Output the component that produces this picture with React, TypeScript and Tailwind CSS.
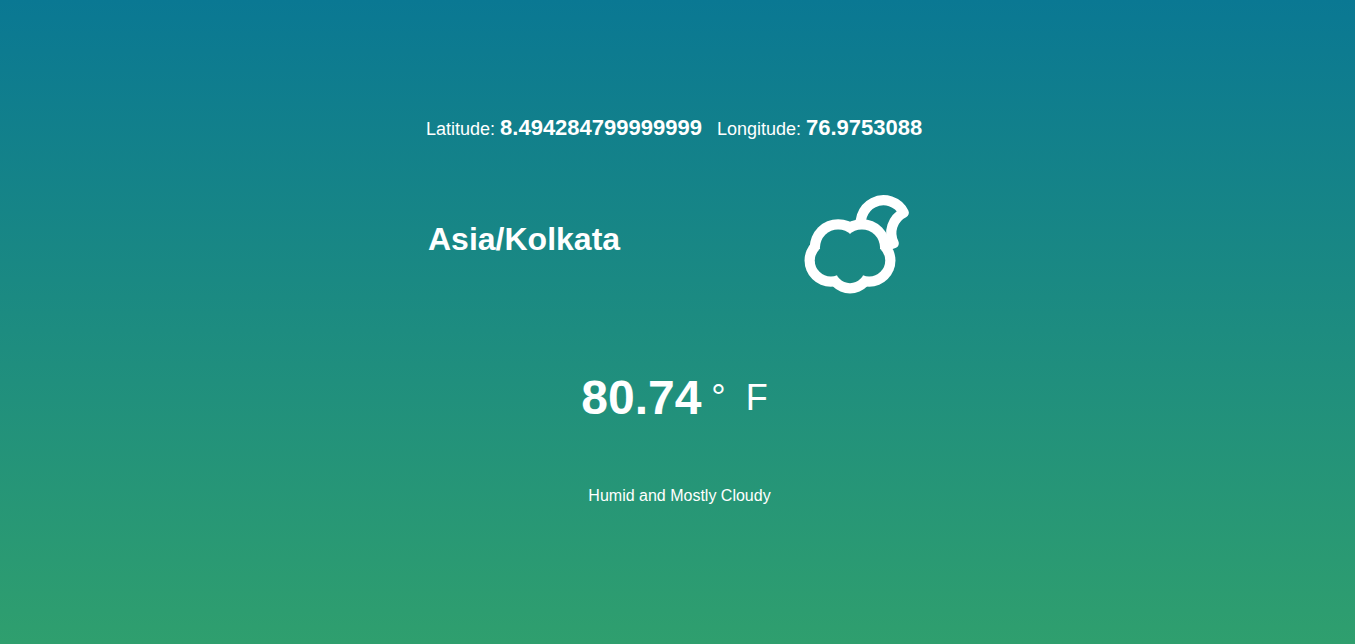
const outerPuffs = [
  { cx: 48, cy: 93.44, r: 24.96 },
  { cx: 28.83, cy: 85.48, r: 26.29 },
  { cx: 67.17, cy: 85.48, r: 26.29 },
  { cx: 36.15, cy: 72.6, r: 28.43 },
  { cx: 59.85, cy: 72.6, r: 28.43 },
];

const STROKE = 10.24;

function CloudyNightIcon() {
  return (
    <svg width="128" height="128" viewBox="0 0 128 128" role="img" aria-label="Partly cloudy night" className="shrink-0">
      <mask id="cloud-hollow" maskUnits="userSpaceOnUse" x="0" y="0" width="128" height="128">
        <rect width="128" height="128" fill="white" />
        {outerPuffs.map((p, i) => (
          <circle key={i} cx={p.cx} cy={p.cy} r={p.r - STROKE} fill="black" />
        ))}
      </mask>
      <g mask="url(#cloud-hollow)">
        <path
          d="M91.73 68.28A22.72 22.72 0 1 1 101.77 37.76A22.72 22.72 0 0 0 91.73 68.28Z"
          fill="none"
          stroke="white"
          strokeWidth={STROKE}
          strokeLinejoin="round"
          strokeLinecap="round"
        />
        {outerPuffs.map((p, i) => (
          <circle key={i} cx={p.cx} cy={p.cy} r={p.r} fill="white" />
        ))}
      </g>
    </svg>
  );
}

export default function App() {
  return (
    <main className="flex min-h-screen flex-col items-center bg-linear-to-b/srgb from-[#0a7893] to-[#2f9f6e] px-4 pt-28 pb-16 font-['Liberation_Sans',Arial,sans-serif] text-white">
      <div className="w-full max-w-[505px] pl-px">
        <div className="flex flex-wrap gap-x-[15px] text-lg leading-8">
          <p>
            Latitude: <strong className="text-[22px] leading-8">8.494284799999999</strong>
          </p>
          <p>
            Longitude: <strong className="text-[22px] leading-8">76.9753088</strong>
          </p>
        </div>
        <section className="mt-[30px] flex items-center justify-between pl-0.5">
          <h1 className="text-[32px] leading-10 font-bold">Asia/Kolkata</h1>
          <CloudyNightIcon />
        </section>
      </div>
      <section className="mt-[65px] flex flex-col items-center">
        <div className="flex h-[60px] items-center pr-1.5">
          <h2 className="text-5xl font-bold">80.74</h2>
          <span className="ml-2.5 flex gap-5 text-4xl">
            <span>°</span>
            <span>F</span>
          </span>
        </div>
        <p className="mt-14 pl-1 text-base leading-6">Humid and Mostly Cloudy</p>
      </section>
    </main>
  );
}
